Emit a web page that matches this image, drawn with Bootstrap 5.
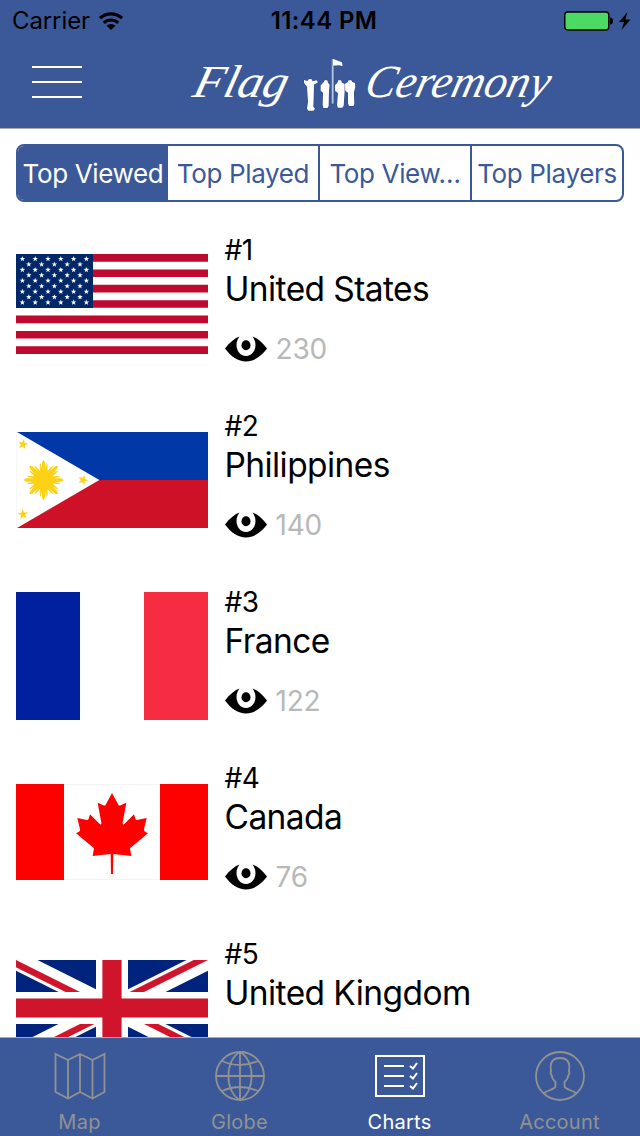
<!DOCTYPE html>
<html lang="en">
<head>
<meta charset="utf-8">
<meta name="viewport" content="width=device-width, initial-scale=1">
<title>Flag Ceremony</title>
<link rel="stylesheet" href="https://cdn.jsdelivr.net/npm/bootstrap@5.3.0/dist/css/bootstrap.min.css">
<style>
:root{--brand:#3b5998}
body{font-family:Inter,Roboto,"Liberation Sans",sans-serif;color:#000;background:#fff;line-height:1.2;height:1136px;overflow:hidden}
svg{display:block;flex:none}
.app-head{background:var(--brand);height:129px;border-bottom:1px solid #a9a9a9}
.status{height:40px;font-size:24px;padding:2px 8px 0 12px}
.status>div{flex:1 1 0}
.status .carrier{letter-spacing:-.1px}
.status .clock{font-weight:600;flex:none;letter-spacing:.35px;padding-left:4px}
.brand-row{height:88px;padding-left:32px}
.burger{margin-top:-4px}
.seg{margin:15px 16px 14px;height:58px;border:2px solid var(--brand);border-radius:8px;overflow:hidden}
.seg .btn{--bs-btn-color:var(--brand);--bs-btn-font-size:26px;--bs-btn-padding-x:0;--bs-btn-padding-y:0;--bs-btn-border-width:0;--bs-btn-border-radius:0;--bs-btn-active-bg:var(--brand);--bs-btn-active-color:#fff;flex:0 0 150px;line-height:55px;letter-spacing:-.35px;white-space:nowrap}
.seg .btn:nth-child(n+3){flex-basis:152px;border-left:2px solid var(--brand)}
.chart-row{height:176px;padding:0 16px}
.info{padding-top:17px;margin-left:16.500px}
.rank{font-size:28px;line-height:34px;letter-spacing:-.5px}
.country{font-size:33.500px;line-height:44px;letter-spacing:-.58px;white-space:nowrap}
.views{font-size:28px;line-height:32px;margin-top:22px;gap:9px;color:#b8b8b8;letter-spacing:-.2px}
.tabs{height:99px;background:var(--brand);border-top:1px solid #a9a9a9;color:#929292}
.tabs .nav-link{color:inherit;padding:13px 1px 0 0;font-size:20px;line-height:25px;letter-spacing:.25px}
.tabs .nav-link.active{color:#fff}
.tabs .nav-link svg{margin:0 auto 9px}
</style>
</head>
<body class="d-flex flex-column">
<header class="app-head flex-shrink-0">
  <div class="status d-flex align-items-center">
    <div class="d-flex align-items-center gap-2"><span class="carrier">Carrier</span>
      <svg width="26" height="20" viewBox="0 0 26 20" fill="none" stroke="#000"><path d="M2 7.200a16 16 0 0 1 22 0" stroke-width="3.200"/><path d="M5.800 11.800a10.500 10.500 0 0 1 14.400 0" stroke-width="3"/><path d="M13 19 8.600 14.800a6.400 6.400 0 0 1 8.800 0z" fill="#000" stroke="none"/></svg>
    </div>
    <div class="clock">11:44 PM</div>
    <div class="d-flex justify-content-end">
      <svg width="68" height="20" viewBox="0 0 68 20"><rect x=".8" y="1" width="44" height="18" rx="3" fill="#4cd964" stroke="#000" stroke-width="1.400"/><path d="M46 6.500q3 0 3 3.500t-3 3.500z"/><path d="M63.500 1 55 11h5l-2.500 8 9-10.500h-5.200z"/></svg>
    </div>
  </div>
  <div class="brand-row d-flex align-items-center">
    <svg class="burger" width="50" height="34" viewBox="0 0 50 34" stroke="#fff" stroke-width="2"><path d="M0 2h50M0 17h50M0 32h50"/></svg>
    <svg class="ms-auto" style="margin-right:80px" width="372" height="64" viewBox="0 0 372 64" fill="#fff" font-family="'Liberation Serif',serif" font-style="italic">
      <g transform="translate(3 45) skewX(-14)"><text font-size="46" textLength="94" lengthAdjust="spacingAndGlyphs">Flag</text></g>
      <g transform="translate(175 45) skewX(-14)"><text font-size="46" textLength="184" lengthAdjust="spacingAndGlyphs">Ceremony</text></g>
      <g transform="translate(-8 -2) scale(.3333)" stroke="#1c3f8c" stroke-width="2" paint-order="stroke">
        <path d="M372 90l10 3 5-6 8 1 3 6 12-3 4 6-12 7-1 44-1 22 5 6-4 6h-16l-4-6 3-20-3-46-9-12z"/>
        <path d="M422 106l9-9 3-6h8l2 7 5 6-2 20-1 44-3 6h-13l-2-8 1-38-7-6z"/>
        <path d="M455 27h6v134h-6z" fill="#b4c2de"/><path d="M458 26l28 11 2 12-10-3-19 1z"/>
        <path d="M465 106l7-8 3-7h8l3 7 9 4-1 22-3 44-4 5h-13l-3-8 3-36-9-6z"/>
        <path d="M495 101l8-4 3-6h8l3 5 8 3 1 12-4 16 1 36-3 5h-13l-3-8v-32l-8-6z"/>
      </g>
    </svg>
  </div>
</header>

<main class="flex-grow-1 overflow-hidden">
  <div class="seg d-flex" role="group">
    <button class="btn active">Top Viewed</button><button class="btn">Top Played</button><button class="btn">Top View…</button><button class="btn">Top Players</button>
  </div>

  <section class="chart-row d-flex">
    <svg class="align-self-center" width="192" height="100" viewBox="0 0 192 100">
      <rect width="192" height="100" fill="#fff"/>
      <path d="M0 3.850h192M0 19.230h192M0 34.620h192M0 50h192M0 65.380h192M0 80.770h192M0 96.150h192" stroke="#bf0a30" stroke-width="7.690"/>
      <rect width="77" height="54" fill="#002868"/><g id="stars" fill="#fff"></g>
    </svg>
    <div class="info"><div class="rank">#1</div><div class="country">United States</div>
      <div class="views d-flex align-items-center"><svg width="42" height="26"><use href="#eye"/></svg>230</div></div>
  </section>

  <section class="chart-row d-flex">
    <svg class="align-self-center" width="192" height="96" viewBox="48 36 576 288">
      <path d="M48 36h576v144H48z" fill="#0038a8"/><path d="M48 180h576v144H48z" fill="#ce1126"/><path d="M48 35 51 36 298 180 51 324 48 325z" fill="#fff"/><path d="M49 36v288" stroke="#f0f0f0" stroke-width="2"/>
      <g fill="#fcd116"><circle cx="131" cy="180" r="31"/><g id="sun" transform="translate(131 180)"></g>
      <use href="#starshape" transform="translate(69 73) rotate(10) scale(16)"/>
      <use href="#starshape" transform="translate(69 283) rotate(-5) scale(16)"/><use href="#starshape" transform="translate(249 180) rotate(20) scale(16)"/></g>
    </svg>
    <div class="info"><div class="rank">#2</div><div class="country">Philippines</div>
      <div class="views d-flex align-items-center"><svg width="42" height="26"><use href="#eye"/></svg>140</div></div>
  </section>

  <section class="chart-row d-flex">
    <svg class="align-self-center" width="192" height="128"><rect width="64" height="128" fill="#00209f"/><rect x="128" width="64" height="128" fill="#f62c42"/></svg>
    <div class="info"><div class="rank">#3</div><div class="country">France</div>
      <div class="views d-flex align-items-center"><svg width="42" height="26"><use href="#eye"/></svg>122</div></div>
  </section>

  <section class="chart-row d-flex">
    <svg class="align-self-center" width="192" height="96" viewBox="48 42 576 288">
      <path d="M192 43.500h288M192 328.500h288" stroke="#f3f3f3" stroke-width="3"/>
      <path fill="red" d="M48 42h144v288H48zM480 42h144v288H480zM336 69 355 104q2 4 7 2L379 98 368 158q0 8 5 4L402 133 406 146q1 4 5 4L440 144 432 178q0 5 3 7L444 190 390 235 394 258 340 252 339 312H333L332 252 278 258 282 235 228 190 237 185q4-2 3-7L232 144 261 150q4 0 5-4L270 133 299 162q6 4 5-4L293 98 310 106q5 2 7-2z"/>
    </svg>
    <div class="info"><div class="rank">#4</div><div class="country">Canada</div>
      <div class="views d-flex align-items-center"><svg width="42" height="26"><use href="#eye"/></svg>76</div></div>
  </section>

  <section class="chart-row d-flex">
    <svg class="align-self-center" width="192" height="96" viewBox="0 0 60 30">
      <clipPath id="quarters"><path d="M30 15H60V30zM30 15V30H0zM30 15H0V0zM30 15V0H60z"/></clipPath>
      <path fill="#00247d" d="M0 0h60v30H0z"/><path d="M0 0 60 30M60 0 0 30" stroke="#fff" stroke-width="6"/>
      <path d="M0 0 60 30M60 0 0 30" stroke="#cf142b" stroke-width="4" clip-path="url(#quarters)"/>
      <path d="M30 0v30M0 15h60" stroke="#fff" stroke-width="10"/><path d="M30 0v30M0 15h60" stroke="#cf142b" stroke-width="6"/>
    </svg>
    <div class="info"><div class="rank">#5</div><div class="country">United Kingdom</div></div>
  </section>
</main>

<nav class="tabs nav nav-fill flex-nowrap flex-shrink-0">
  <a class="nav-link w-25" href="#"><svg width="52" height="50" viewBox="0 0 52 50" fill="none" stroke="currentColor" stroke-width="1.800"><path d="M1.500 3 14 9 26 3 38.500 9 50.500 3V41L38.500 47.500 26 41 14 47.500 1.500 41zM14 9V47M26 3V41M38.500 9V47"/></svg>Map</a>
  <a class="nav-link w-25" href="#"><svg width="50" height="50" viewBox="0 0 50 50" fill="none" stroke="currentColor" stroke-width="1.800"><circle cx="25" cy="25" r="24"/><path d="M25 1v48M1 25h48M25 1C9.500 9 9.500 41 25 49M25 1C40.500 9 40.500 41 25 49M7 10q18 8 36 0M7 40q18-8 36 0"/></svg>Globe</a>
  <a class="nav-link w-25 active" href="#"><svg width="50" height="50" viewBox="0 0 50 50" fill="none" stroke="currentColor" stroke-width="2"><path d="M1 5h48v40H1zM9 15h20M9 25h20M9 35h20"/><path d="M35 15l3 2.500 4-5.500M35 25l3 2.500 4-5.500M35 35l3 2.500 4-5.500"/></svg>Charts</a>
  <a class="nav-link w-25" href="#"><svg width="50" height="50" viewBox="0 0 50 50" fill="none" stroke="currentColor" stroke-width="1.800"><circle cx="25" cy="25" r="24"/><path d="M8.500 42.500C12 39 20 38.500 20.500 35.500V31C18 29 17 26.500 16.800 24.500 15.300 23 15.500 21 16 20 14.500 11 18 7 25 7S35.500 11 34 20C34.500 21 34.700 23 33.200 24.500 33 26.500 32 29 29.500 31V35.500C30 38.500 38 39 41.500 42.500"/></svg>Account</a>
</nav>

<svg width="0" height="0" class="position-absolute"><defs>
  <path id="starshape" d="M0-1 .24-.32.95-.31.38.12.59.81 0 .4-.59.81-.38.12-.95-.31-.24-.32z"/>
  <g id="eye"><path fill="#000" d="M0 12.500C5 6 10 2 14.500.5 8.500 8 12 20 21 20S33.500 8 27.500.5C32 2 37 6 42 12.500 36 20.500 29 25.500 21 25.500S6 20.500 0 12.500z"/><ellipse fill="#000" cx="21" cy="9.300" rx="4.500" ry="5"/></g>
</defs></svg>
<script src="https://cdn.jsdelivr.net/npm/bootstrap@5.3.0/dist/js/bootstrap.bundle.min.js"></script>
<script>
// canton: nine alternating rows of six and five stars
let s='';
for(let r=0;r<9;r++)for(let c=0;c<6-r%2;c++)s+=`<use href="#starshape" transform="translate(${6.4+12.8*c+6.4*(r%2)} ${4.9+5.45*r}) scale(2.900)"/>`;
document.getElementById('stars').innerHTML=s;
// eight tapered rays, each with two shorter side rays
let t='';
for(let a=0;a<360;a+=45)t+=`<path transform="rotate(${a})" d="M-6 -28 -5 -52 0 -61 5 -52 6 -28zM-11 -26 -12 -46 -9 -50 -5 -28zM11 -26 12 -46 9 -50 5 -28z"/>`;
document.getElementById('sun').innerHTML=t;
</script>
</body>
</html>
